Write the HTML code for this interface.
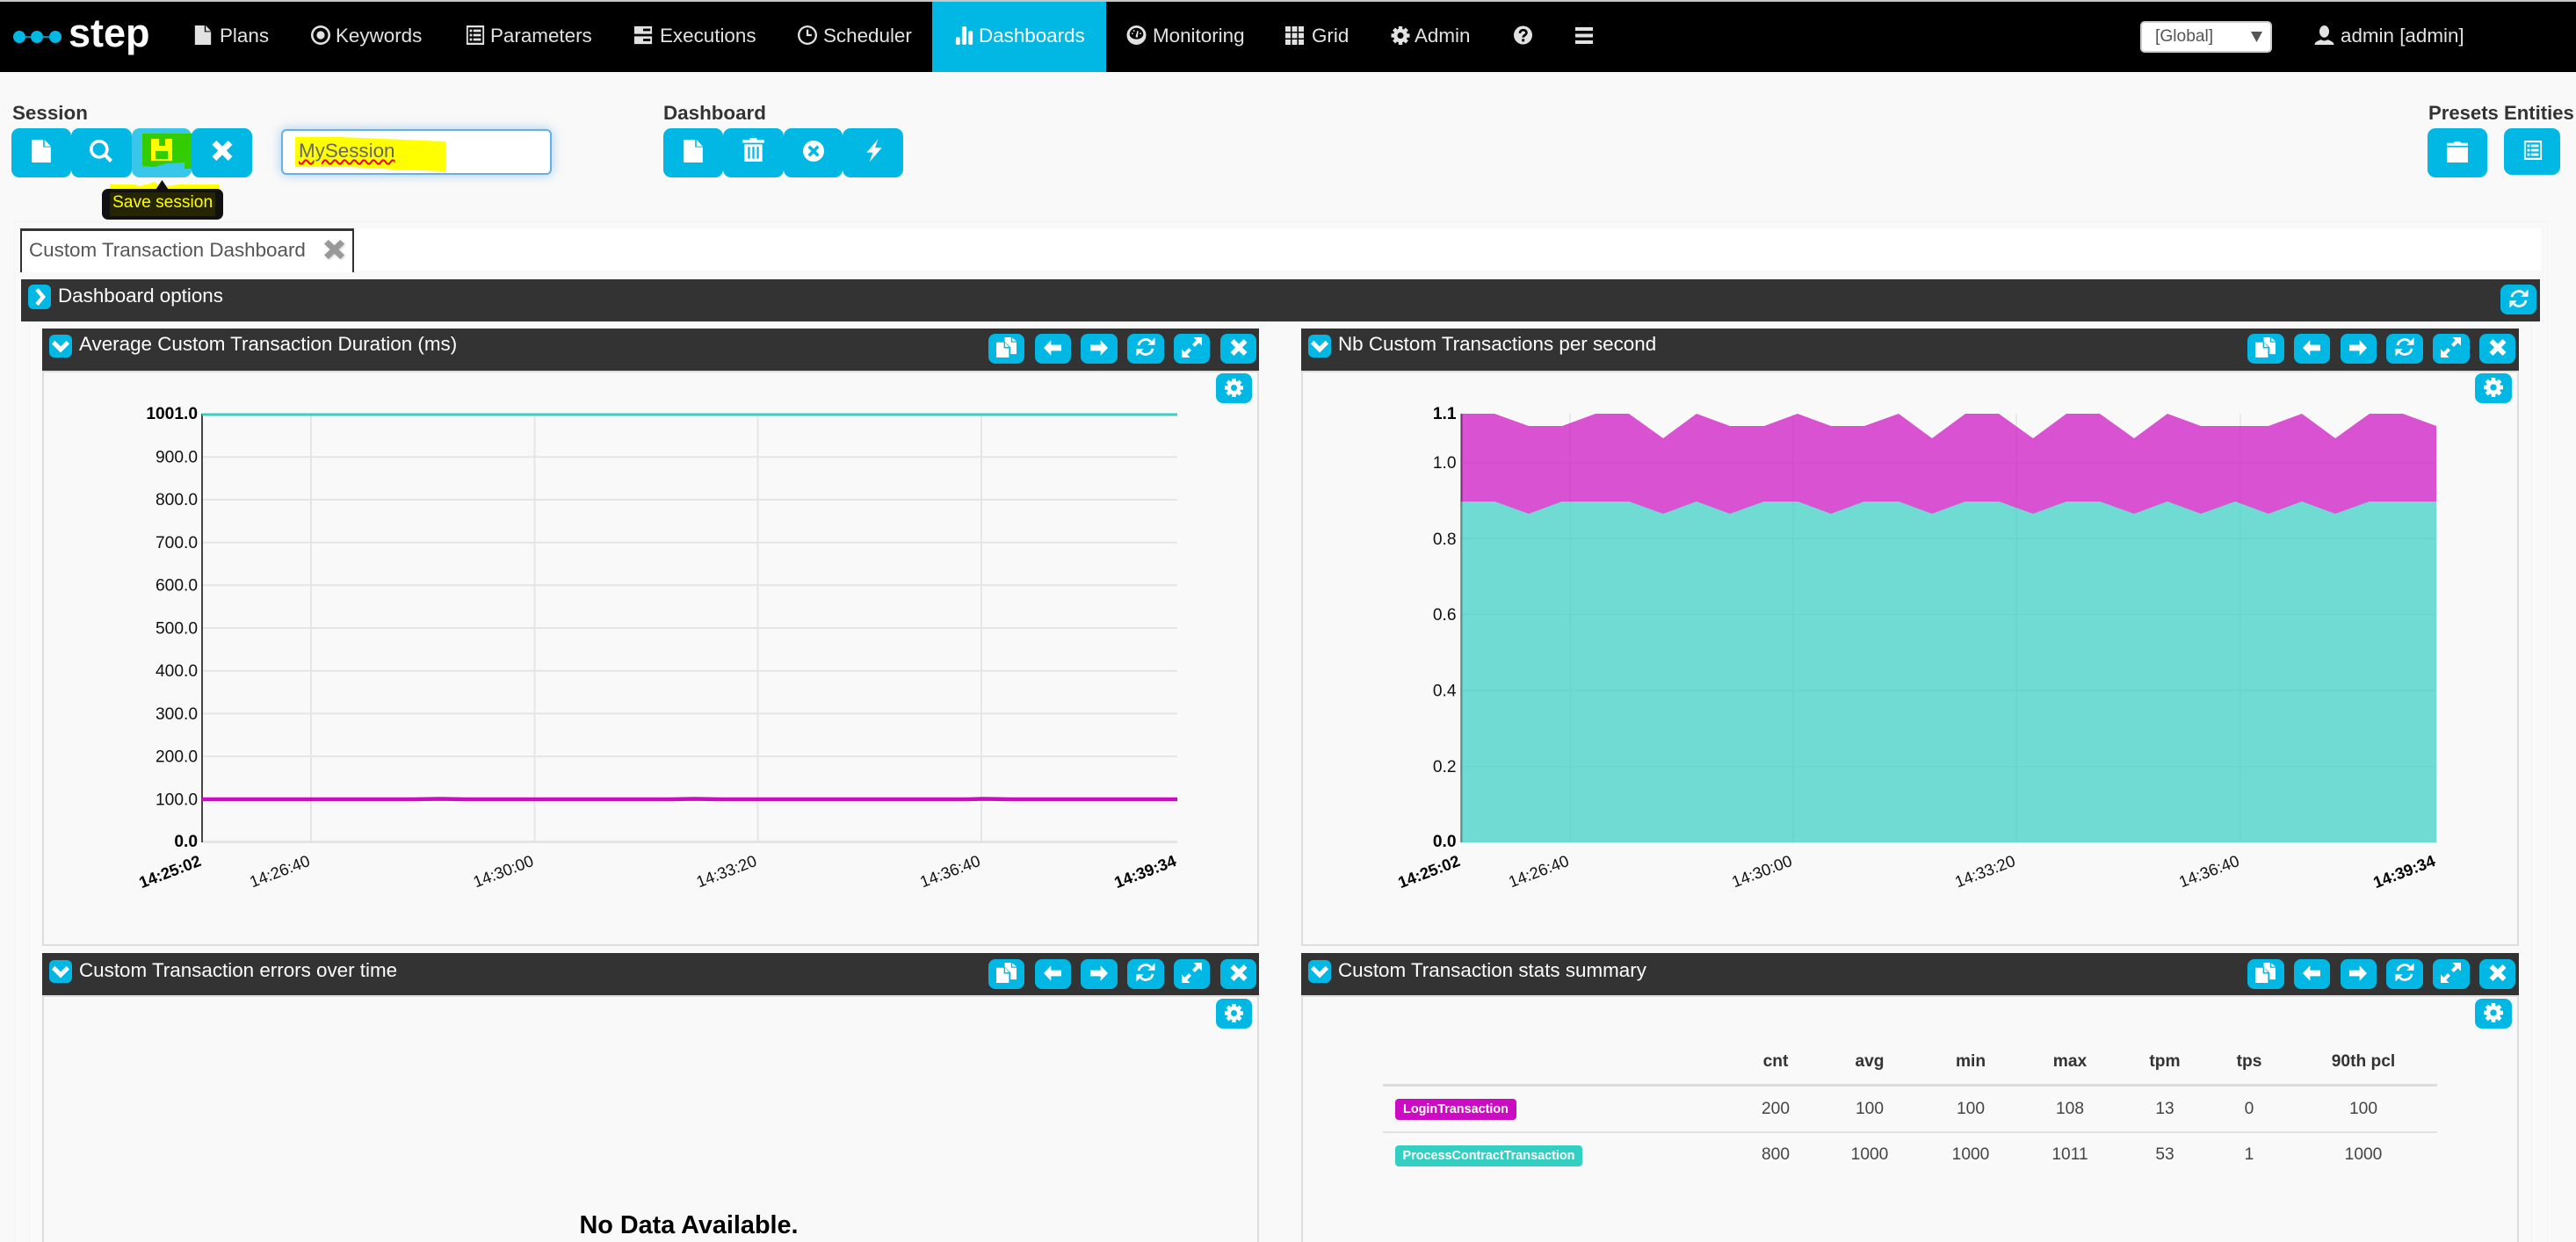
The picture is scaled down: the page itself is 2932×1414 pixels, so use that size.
<!DOCTYPE html>
<html lang="en">
<head>
<meta charset="utf-8">
<title>step - Dashboards</title>
<style>
html,body{margin:0;padding:0;width:2932px;height:1414px;overflow:hidden;background:#f9f9f9;font-family:"Liberation Sans",Arial,sans-serif;color:#333}
div,span,svg{box-sizing:border-box}
#root{position:absolute;left:0;top:0;width:2932px;height:1414px;overflow:hidden;background:#f9f9f9}
.a{position:absolute}
.t{position:absolute;white-space:nowrap;font-size:22.4px;line-height:30px}
.n{color:#e2e2e2;top:26px}
svg.i{position:absolute;overflow:visible;fill:currentColor}
.nav{position:absolute;left:0;top:2px;width:2932px;height:80px;background:#000}
.top{position:absolute;left:0;top:0;width:2932px;height:2px;background:#c8c8c8}
.ni{color:#e2e2e2}
.b{position:absolute;top:146px;height:56px;background:#00b8e3;border-radius:9px;color:#fff}
.s{position:absolute;height:34px;background:#00b8e3;border-radius:8px;color:#fff}
.h{position:absolute;height:48px;background:#333}
.p{position:absolute;border:2.5px solid #ddd;border-top-width:2px}
.c{position:absolute;white-space:nowrap;transform:translateX(-50%);font-size:19.2px;line-height:26px;color:#444}
.th{font-weight:bold;color:#333}
.tag{position:absolute;left:1588px;height:24px;border-radius:4px;color:#fff;font-weight:bold;font-size:14.4px;line-height:24px;text-align:center;white-space:nowrap}
.fl{position:absolute;background:#f4f4f4;width:1px}
svg text{font-family:"Liberation Sans",Arial,sans-serif;font-size:19.2px;fill:#111}
svg text.bd{font-weight:bold;fill:#000}
svg text.x{font-size:18.4px}
</style>
</head>
<body>
<div id="root">
<svg width="0" height="0" style="position:absolute">
<defs>
<symbol id="file" viewBox="0 0 24 24"><path d="M2 0h12v8h8v16H2zM15.500 0l6.500 7h-6.500z"/></symbol>
<symbol id="search" viewBox="0 0 24 24"><path fill-rule="evenodd" d="M0 10a10 10 0 1 0 20 0a10 10 0 1 0-20 0zM3.400 10a6.600 6.600 0 1 1 13.200 0a6.600 6.600 0 1 1-13.200 0z"/><path d="M15.500 18l2.700-2.700 5.800 5.900-2.800 2.800z"/></symbol>
<symbol id="x" viewBox="0 0 24 24"><path d="M0 5l5-5 7 7 7-7 5 5-7 7 7 7-5 5-7-7-7 7-5-5 7-7z"/></symbol>
<symbol id="rec" viewBox="0 0 24 24"><path fill-rule="evenodd" d="M0 12a12 12 0 1 0 24 0a12 12 0 1 0-24 0zM2.800 12a9.200 9.200 0 1 1 18.400 0a9.200 9.200 0 1 1-18.400 0z"/><circle cx="12" cy="12" r="5"/></symbol>
<symbol id="list" viewBox="0 0 24 24"><path fill-rule="evenodd" d="M1 0h22v24H1zM3 2.500v19h18v-19z"/><path d="M5 5h3v3H5zM9.500 5H19v3H9.500zM5 10.500h3v3H5zM9.500 10.500H19v3H9.500zM5 16h3v3H5zM9.500 16H19v3H9.500z"/></symbol>
<symbol id="hdd" viewBox="0 0 24 24"><path fill-rule="evenodd" d="M1 1h22v9.500H1zM12 4v3h9V4zM1 13.500h22V23H1zM12 16.500v3h9v-3z"/></symbol>
<symbol id="time" viewBox="0 0 24 24"><path fill-rule="evenodd" d="M0 12a12 12 0 1 0 24 0a12 12 0 1 0-24 0zM2.500 12a9.500 9.500 0 1 1 19 0a9.500 9.500 0 1 1-19 0z"/><path d="M10.800 5h2.500v8.200h-2.500zM10.800 10.800h6.500v2.400h-6.500z"/></symbol>
<symbol id="stats" viewBox="0 0 24 24"><rect x="1" y="14" width="5.500" height="10" rx="2"/><rect x="9" y="0" width="6" height="24" rx="2.500"/><rect x="17.500" y="6" width="5.500" height="18" rx="2"/></symbol>
<symbol id="dash" viewBox="0 0 24 24"><path fill-rule="evenodd" d="M0 12a12 12 0 1 0 24 0a12 12 0 1 0-24 0zM3.500 11a8.500 8 0 1 1 17 0a8.500 6 0 0 1-17 0z"/><path d="M11 13.500l2-7 1.500.5-1 7.500a1.500 1.500 0 0 1-2.500-1z"/><circle cx="7" cy="10" r="1"/><circle cx="9" cy="6.500" r="1"/><circle cx="17" cy="10" r="1"/></symbol>
<symbol id="grid" viewBox="0 0 24 24"><path d="M0 0h6.800v6.800H0zM8.600 0h6.800v6.800H8.600zM17.200 0H24v6.800h-6.800zM0 8.600h6.800v6.800H0zM8.600 8.600h6.800v6.800H8.600zM17.200 8.600H24v6.800h-6.800zM0 17.200h6.800V24H0zM8.600 17.200h6.800V24H8.600zM17.200 17.200H24V24h-6.800z"/></symbol>
<symbol id="cog" viewBox="0 0 24 24"><path fill-rule="evenodd" d="M3 12a9 9 0 1 0 18 0a9 9 0 1 0-18 0zM8 12a4 4 0 1 1 8 0a4 4 0 1 1-8 0z"/><rect x="9.500" y="0" width="5" height="5"/><rect x="9.500" y="19" width="5" height="5"/><rect x="0" y="9.500" width="5" height="5"/><rect x="19" y="9.500" width="5" height="5"/><rect x="9.500" y="0" width="5" height="5" transform="rotate(45 12 12)"/><rect x="9.500" y="0" width="5" height="5" transform="rotate(135 12 12)"/><rect x="9.500" y="0" width="5" height="5" transform="rotate(225 12 12)"/><rect x="9.500" y="0" width="5" height="5" transform="rotate(315 12 12)"/></symbol>
<symbol id="help" viewBox="0 0 24 24"><circle cx="12" cy="12" r="12"/><path d="M8 9.500c0-5.500 8.500-5.500 8.500-.5 0 3-4.300 3-4.300 6" fill="none" stroke="#000" stroke-width="3"/><rect x="10.500" y="17" width="3.400" height="3.400" fill="#000"/></symbol>
<symbol id="menu" viewBox="0 0 24 24"><path d="M0 0h24v5H0zM0 9.500h24v5H0zM0 19h24v5H0z"/></symbol>
<symbol id="user" viewBox="0 0 24 24"><ellipse cx="12" cy="7.500" rx="6" ry="7.500"/><path d="M0 24c0-4 5-5 8-6.500 1 1 2.500 1.500 4 1.500s3-.5 4-1.500c3 1.500 8 2.500 8 6.500z"/></symbol>
<symbol id="trash" viewBox="0 0 24 24"><path d="M8.500 0h7v2H23v3H1V2h7.500z"/><path fill-rule="evenodd" d="M3 6.500h18V24H3zM6.500 9v12h2V9zM11 9v12h2V9zM15.500 9v12h2V9z"/></symbol>
<symbol id="rc" viewBox="0 0 24 24"><path fill-rule="evenodd" d="M0 12a12 12 0 1 0 24 0a12 12 0 1 0-24 0zM8 5.500l4 4 4-4 2.500 2.500-4 4 4 4-2.500 2.500-4-4-4 4L5.500 16l4-4-4-4z"/></symbol>
<symbol id="flash" viewBox="0 0 24 24"><path d="M16 0L4 14h6.500L7 24 20 9h-7z"/></symbol>
<symbol id="folder" viewBox="0 0 24 24"><path d="M1 8h22v16H1zM1 3.500h7L9.500 2h5L16 3.500h7v3H1z"/></symbol>
<symbol id="dup" viewBox="0 0 24 24"><path d="M0 6h9v7h6v11H0zM10.500 6l4.500 5.500h-4.500z"/><path d="M10 0h7.500v6H24v14h-7v-8l-7-7zM19 .5l5 4.200h-5z"/></symbol>
<symbol id="al" viewBox="0 0 24 24"><path d="M0 12L10 1.500V8h14v8H10v6.500z"/></symbol>
<symbol id="ar" viewBox="0 0 24 24"><path d="M24 12L14 1.500V8H0v8h14v6.500z"/></symbol>
<symbol id="ref" viewBox="0 0 24 24"><path d="M3.200 10a8.800 8.800 0 0 1 15-4.500M20.800 14a8.800 8.800 0 0 1-15 4.500" fill="none" stroke="currentColor" stroke-width="3"/><path d="M23.500 .5v9h-9zM.5 23.500v-9h9z"/></symbol>
<symbol id="rs" viewBox="0 0 24 24"><path d="M14 0h10v10l-3.500-3.500-5 5-3-3 5-5zM10 24H0V14l3.500 3.500 5-5 3 3-5 5z"/></symbol>
<symbol id="cr" viewBox="0 0 24 24"><path d="M8 0l10 12L8 24l-4-3.500L11 12 4 3.500z"/></symbol>
<symbol id="cd" viewBox="0 0 24 24"><path d="M0 9l4-4.500 8 8 8-8L24 9 12 21z"/></symbol>
</defs>
</svg>

<div class="top"></div>
<div class="nav"></div>

<!-- logo -->
<svg class="a" style="left:10px;top:30px" width="66" height="24"><path d="M10 12h50" stroke="#00b8e3" stroke-width="1.500"/><circle cx="12" cy="12" r="7" fill="#00b8e3"/><circle cx="32" cy="12" r="7" fill="#00b8e3"/><circle cx="53" cy="12" r="7" fill="#00b8e3"/></svg>
<div class="t" style="left:78px;top:10px;font-size:45px;line-height:56px;font-weight:bold;color:#fff">step</div>

<!-- nav -->
<div class="a" style="left:1061px;top:2px;width:198px;height:80px;background:#00b8e3"></div>
<svg class="i ni" style="left:219px;top:29px" width="24" height="22"><use href="#file"/></svg><div class="t n" style="left:250px">Plans</div>
<svg class="i ni" style="left:354px;top:29px" width="22" height="22"><use href="#rec"/></svg><div class="t n" style="left:382px">Keywords</div>
<svg class="i ni" style="left:530px;top:29px" width="22" height="22"><use href="#list"/></svg><div class="t n" style="left:558px">Parameters</div>
<svg class="i ni" style="left:721px;top:29px" width="22" height="22"><use href="#hdd"/></svg><div class="t n" style="left:751px">Executions</div>
<svg class="i ni" style="left:908px;top:29px" width="22" height="22"><use href="#time"/></svg><div class="t n" style="left:937px">Scheduler</div>
<svg class="i" style="left:1087px;top:30px;color:#fff" width="21" height="21"><use href="#stats"/></svg><div class="t n" style="left:1114px;color:#fff">Dashboards</div>
<svg class="i ni" style="left:1282px;top:29px" width="23" height="22"><use href="#dash"/></svg><div class="t n" style="left:1312px">Monitoring</div>
<svg class="i ni" style="left:1463px;top:30px" width="21" height="21"><use href="#grid"/></svg><div class="t n" style="left:1493px">Grid</div>
<svg class="i ni" style="left:1583px;top:30px" width="22" height="21"><use href="#cog"/></svg><div class="t n" style="left:1610px">Admin</div>
<svg class="i ni" style="left:1723px;top:29px" width="21" height="22"><use href="#help"/></svg>
<svg class="i ni" style="left:1793px;top:31px" width="20" height="19" preserveAspectRatio="none" viewBox="0 0 24 24"><use href="#menu"/></svg>

<!-- select / user -->
<div class="a" style="left:2436px;top:24px;width:150px;height:36px;background:#fff;border:2px solid #ccc;border-radius:5px"></div>
<div class="t" style="left:2453px;top:27px;font-size:19.200px;color:#555">[Global]</div>
<svg class="a" style="left:2562px;top:36px" width="13" height="12"><path d="M0 0h13L6.500 12z" fill="#555"/></svg>
<svg class="i ni" style="left:2634px;top:29px" width="23" height="22"><use href="#user"/></svg>
<div class="t n" style="left:2664px">admin [admin]</div>

<!-- session -->
<div class="t" style="left:14px;top:114px;font-weight:bold">Session</div>
<div class="b" style="left:13px;width:68px"><svg class="i" style="left:21px;top:13px" width="26" height="26"><use href="#file"/></svg></div>
<div class="b" style="left:81px;width:69px"><svg class="i" style="left:21px;top:13px" width="26" height="26"><use href="#search"/></svg></div>
<div class="b" style="left:150px;width:68px;background:#38c6ea"></div>
<svg class="a" style="left:0;top:0" width="300" height="260">
<path d="M162 152h59v40h-11v-7l-20 1-15 4-13-1z" fill="#33cc00"/>
<path fill-rule="evenodd" d="M172 158h24v25h-24zM181 158v8h7v-8zM177 172v9h14v-9z" fill="#ffff00"/>
<path d="M125 210h28l6 2 6-2h4l6-3 5 3 10 2 14-2h45v8H125z" fill="#ffff00"/>
<path d="M184.500 205l8 12h-16z" fill="#111"/>
</svg>
<div class="b" style="left:218px;width:69px"><svg class="i" style="left:23px;top:14px" width="24" height="23"><use href="#x"/></svg></div>

<div class="a" style="left:116px;top:215px;width:138px;height:35px;background:#111;border-radius:7px"></div>
<div class="a" style="left:125px;top:219px;width:120px;height:27px;background:#252500"></div>
<div class="t" style="left:128px;top:216px;font-size:19.200px;color:#ffff00">Save session</div>

<div class="a" style="left:320px;top:147px;width:308px;height:52px;background:#fff;border:2px solid #66afe9;border-radius:6px;box-shadow:0 0 13px rgba(102,175,233,.6)"></div>
<svg class="a" style="left:330px;top:150px" width="190" height="50"><path d="M6 6h51l120 5v34l-57-2-50-3H6z" fill="#ffff00"/></svg>
<div class="t" style="left:340px;top:157px;color:#666;text-decoration:underline wavy #e00;text-decoration-thickness:1.500px;text-underline-offset:2px">MySession</div>

<!-- dashboard -->
<div class="t" style="left:755px;top:114px;font-weight:bold">Dashboard</div>
<div class="b" style="left:755px;width:68px"><svg class="i" style="left:21px;top:13px" width="26" height="26"><use href="#file"/></svg></div>
<div class="b" style="left:823px;width:69px"><svg class="i" style="left:21px;top:10px" width="27" height="29"><use href="#trash"/></svg></div>
<div class="b" style="left:892px;width:67px"><svg class="i" style="left:20px;top:14px" width="28" height="24"><use href="#rc"/></svg></div>
<div class="b" style="left:959px;width:69px"><svg class="i" style="left:23px;top:12px" width="26" height="27"><use href="#flash"/></svg></div>

<!-- presets -->
<div class="t" style="left:2764px;top:114px;font-weight:bold;font-size:22.100px">Presets Entities</div>
<div class="b" style="left:2763px;width:68px"><svg class="i" style="left:20px;top:13px" width="28" height="26"><use href="#folder"/></svg></div>
<div class="b" style="left:2850px;width:64px;height:53px"><svg class="i" style="left:21px;top:14px" width="24" height="22"><use href="#list"/></svg></div>

<!-- faint container lines -->
<div class="a" style="left:16px;top:252px;width:2884px;height:1px;background:#f3f3f3"></div>
<div class="fl" style="left:16px;top:252px;height:1162px"></div>
<div class="fl" style="left:33px;top:366px;height:1048px"></div>
<div class="fl" style="left:2881px;top:366px;height:1048px"></div>
<div class="fl" style="left:2899px;top:252px;height:1162px"></div>

<!-- tabs -->
<div class="a" style="left:403px;top:260px;width:2489px;height:48px;background:#fff"></div>
<div class="a" style="left:23px;top:260px;width:380px;height:50px;background:#fff;border:2px solid #333;border-top-width:3px;border-bottom:0"></div>
<div class="t" style="left:33px;top:270px;color:#555">Custom Transaction Dashboard</div>
<svg class="i" style="left:369px;top:273px;color:#999;filter:drop-shadow(1px 1px 1px #ccc)" width="23" height="22" preserveAspectRatio="none" viewBox="0 0 24 24"><use href="#x"/></svg>

<!-- options bar -->
<div class="h" style="left:24px;top:318px;width:2867px"></div>
<div class="s" style="left:32px;top:324px;width:26px;height:28px;border-radius:6px"><svg class="i" style="left:5px;top:4px" width="20" height="20"><use href="#cr"/></svg></div>
<div class="t" style="left:66px;top:322px;color:#fff">Dashboard options</div>
<div class="s" style="left:2846px;top:324px;width:41px"><svg class="i" style="left:10px;top:5px" width="22" height="22"><use href="#ref"/></svg></div>

<!-- panels -->
<div class="p" style="left:48px;top:422px;width:1385px;height:655px"></div>
<div class="p" style="left:1481px;top:422px;width:1386px;height:655px"></div>
<div class="p" style="left:48px;top:1133px;width:1385px;height:281px;border-bottom:0"></div>
<div class="p" style="left:1481px;top:1133px;width:1386px;height:281px;border-bottom:0"></div>

<!-- charts -->
<svg class="a" style="left:0;top:0" width="2932" height="1414">
<g stroke="#e5e5e5" stroke-width="2" fill="none">
<path d="M230 909.800H1340M230 861.100H1340M230 812.400H1340M230 763.700H1340M230 715H1340M230 666.300H1340M230 617.600H1340M230 568.900H1340M230 520.200H1340"/>
<path d="M354 472V958M608.500 472V958M862.500 472V958M1117 472V958"/>
<path d="M230 958.500H1340" stroke-width="3"/>
</g>
<path d="M230 471V959" stroke="#444" stroke-width="2"/>
<path d="M230 472H1340" stroke="#36cfc0" stroke-width="3"/>
<path d="M230 910H470L500 909.500 530 910H760L790 909.500 820 910H1100L1120 909.500 1150 910H1340" stroke="#cc0cc2" stroke-width="4.500" fill="none"/>
<g text-anchor="end">
<text class="bd" x="225" y="477">1001.0</text>
<text x="225" y="526.500">900.0</text><text x="225" y="575">800.0</text><text x="225" y="624">700.0</text><text x="225" y="672.500">600.0</text><text x="225" y="721.500">500.0</text><text x="225" y="770">400.0</text><text x="225" y="819">300.0</text><text x="225" y="867.500">200.0</text><text x="225" y="916.500">100.0</text>
<text class="bd" x="225" y="964">0.0</text>
<text class="bd x" x="230" y="985" transform="rotate(-21 230 985)">14:25:02</text>
<text class="x" x="354" y="985" transform="rotate(-21 354 985)">14:26:40</text>
<text class="x" x="608.500" y="985" transform="rotate(-21 608.500 985)">14:30:00</text>
<text class="x" x="862.500" y="985" transform="rotate(-21 862.500 985)">14:33:20</text>
<text class="x" x="1117" y="985" transform="rotate(-21 1117 985)">14:36:40</text>
<text class="bd x" x="1340" y="985" transform="rotate(-21 1340 985)">14:39:34</text>
</g>

<g stroke="#e5e5e5" stroke-width="1.500" fill="none">
<path d="M1663 527H2773M1663 613H2773M1663 699.500H2773M1663 786H2773M1663 872.500H2773"/>
<path d="M1787 471V959M2041 471V959M2295 471V959M2550 471V959"/>
<path d="M1663 959.500H2773" stroke-width="2"/>
</g>
<path d="M1663.500 471V959" stroke="#333" stroke-width="2"/>
<path opacity=".7" fill="#cc0cc2" d="M1663 471 1701 471 1740 485 1778 485 1816 471 1854 471 1893 499 1931 471 1969 485 2008 485 2046 471 2084 485 2122 485 2161 471 2199 499 2237 471 2275 471 2314 499 2352 471 2390 471 2429 499 2467 471 2505 485 2544 485 2582 485 2620 471 2658 499 2697 471 2735 471 2773 485 2773 571 2735 571 2697 571 2658 585 2620 571 2582 585 2544 571 2505 585 2467 571 2429 585 2390 571 2352 571 2314 585 2275 571 2237 571 2199 585 2161 571 2122 571 2084 585 2046 571 2008 571 1969 585 1931 571 1893 585 1854 571 1816 571 1778 571 1740 585 1701 571 1663 571z"/>
<path opacity=".7" fill="#34cfc3" d="M1663 571 1701 571 1740 585 1778 571 1816 571 1854 571 1893 585 1931 571 1969 585 2008 571 2046 571 2084 585 2122 571 2161 571 2199 585 2237 571 2275 571 2314 585 2352 571 2390 571 2429 585 2467 571 2505 585 2544 571 2582 585 2620 571 2658 585 2697 571 2735 571 2773 571 2773 959 1663 959z"/>
<g text-anchor="end">
<text class="bd" x="1657.500" y="477">1.1</text>
<text x="1657.500" y="533">1.0</text><text x="1657.500" y="620">0.8</text><text x="1657.500" y="706">0.6</text><text x="1657.500" y="792.500">0.4</text><text x="1657.500" y="879">0.2</text>
<text class="bd" x="1657.500" y="964">0.0</text>
<text class="bd x" x="1663" y="985" transform="rotate(-21 1663 985)">14:25:02</text>
<text class="x" x="1787" y="985" transform="rotate(-21 1787 985)">14:26:40</text>
<text class="x" x="2041" y="985" transform="rotate(-21 2041 985)">14:30:00</text>
<text class="x" x="2295" y="985" transform="rotate(-21 2295 985)">14:33:20</text>
<text class="x" x="2550" y="985" transform="rotate(-21 2550 985)">14:36:40</text>
<text class="bd x" x="2773" y="985" transform="rotate(-21 2773 985)">14:39:34</text>
</g>
</svg>

<!-- panel headers row 1 -->
<div class="h" style="left:48px;top:374px;width:1385px"></div>
<div class="s" style="left:56px;top:381px;width:26px;height:26px;border-radius:6px"><svg class="i" style="left:3px;top:3px" width="20" height="20"><use href="#cd"/></svg></div>
<div class="t" style="left:90px;top:377px;color:#fff">Average Custom Transaction Duration (ms)</div>
<div class="s" style="left:1125px;top:380px;width:41px"><svg class="i" style="left:9px;top:4px" width="23" height="23"><use href="#dup"/></svg></div>
<div class="s" style="left:1178px;top:380px;width:41px"><svg class="i" style="left:9px;top:6px" width="22" height="20"><use href="#al"/></svg></div>
<div class="s" style="left:1230px;top:380px;width:42px"><svg class="i" style="left:10px;top:6px" width="22" height="20"><use href="#ar"/></svg></div>
<div class="s" style="left:1283px;top:380px;width:42px"><svg class="i" style="left:10px;top:4px" width="22" height="22"><use href="#ref"/></svg></div>
<div class="s" style="left:1336px;top:380px;width:41px"><svg class="i" style="left:9px;top:4px" width="23" height="23"><use href="#rs"/></svg></div>
<div class="s" style="left:1389px;top:380px;width:41px"><svg class="i" style="left:11px;top:6px" width="20" height="19"><use href="#x"/></svg></div>
<div class="s" style="left:1384px;top:425px;width:41px"><svg class="i" style="left:10px;top:6px" width="21" height="21"><use href="#cog"/></svg></div>

<div class="h" style="left:1481px;top:374px;width:1386px"></div>
<div class="s" style="left:1489px;top:381px;width:26px;height:26px;border-radius:6px"><svg class="i" style="left:3px;top:3px" width="20" height="20"><use href="#cd"/></svg></div>
<div class="t" style="left:1523px;top:377px;color:#fff">Nb Custom Transactions per second</div>
<div class="s" style="left:2558px;top:380px;width:42px"><svg class="i" style="left:9px;top:4px" width="23" height="23"><use href="#dup"/></svg></div>
<div class="s" style="left:2611px;top:380px;width:41px"><svg class="i" style="left:9px;top:6px" width="22" height="20"><use href="#al"/></svg></div>
<div class="s" style="left:2664px;top:380px;width:41px"><svg class="i" style="left:9px;top:6px" width="22" height="20"><use href="#ar"/></svg></div>
<div class="s" style="left:2716px;top:380px;width:42px"><svg class="i" style="left:10px;top:4px" width="22" height="22"><use href="#ref"/></svg></div>
<div class="s" style="left:2769px;top:380px;width:42px"><svg class="i" style="left:9px;top:4px" width="23" height="23"><use href="#rs"/></svg></div>
<div class="s" style="left:2822px;top:380px;width:41px"><svg class="i" style="left:11px;top:6px" width="20" height="19"><use href="#x"/></svg></div>
<div class="s" style="left:2817px;top:425px;width:42px"><svg class="i" style="left:10px;top:5px" width="22" height="22"><use href="#cog"/></svg></div>

<!-- panel headers row 2 -->
<div class="h" style="left:48px;top:1085px;width:1385px"></div>
<div class="s" style="left:56px;top:1093px;width:26px;height:26px;border-radius:6px"><svg class="i" style="left:3px;top:3px" width="20" height="20"><use href="#cd"/></svg></div>
<div class="t" style="left:90px;top:1090px;color:#fff">Custom Transaction errors over time</div>
<div class="s" style="left:1125px;top:1092px;width:41px"><svg class="i" style="left:9px;top:4px" width="23" height="23"><use href="#dup"/></svg></div>
<div class="s" style="left:1178px;top:1092px;width:41px"><svg class="i" style="left:9px;top:6px" width="22" height="20"><use href="#al"/></svg></div>
<div class="s" style="left:1230px;top:1092px;width:42px"><svg class="i" style="left:10px;top:6px" width="22" height="20"><use href="#ar"/></svg></div>
<div class="s" style="left:1283px;top:1092px;width:42px"><svg class="i" style="left:10px;top:4px" width="22" height="22"><use href="#ref"/></svg></div>
<div class="s" style="left:1336px;top:1092px;width:41px"><svg class="i" style="left:9px;top:4px" width="23" height="23"><use href="#rs"/></svg></div>
<div class="s" style="left:1389px;top:1092px;width:41px"><svg class="i" style="left:11px;top:6px" width="20" height="19"><use href="#x"/></svg></div>
<div class="s" style="left:1384px;top:1137px;width:41px"><svg class="i" style="left:10px;top:6px" width="21" height="21"><use href="#cog"/></svg></div>

<div class="h" style="left:1481px;top:1085px;width:1386px"></div>
<div class="s" style="left:1489px;top:1093px;width:26px;height:26px;border-radius:6px"><svg class="i" style="left:3px;top:3px" width="20" height="20"><use href="#cd"/></svg></div>
<div class="t" style="left:1523px;top:1090px;color:#fff">Custom Transaction stats summary</div>
<div class="s" style="left:2558px;top:1092px;width:42px"><svg class="i" style="left:9px;top:4px" width="23" height="23"><use href="#dup"/></svg></div>
<div class="s" style="left:2611px;top:1092px;width:41px"><svg class="i" style="left:9px;top:6px" width="22" height="20"><use href="#al"/></svg></div>
<div class="s" style="left:2664px;top:1092px;width:41px"><svg class="i" style="left:9px;top:6px" width="22" height="20"><use href="#ar"/></svg></div>
<div class="s" style="left:2716px;top:1092px;width:42px"><svg class="i" style="left:10px;top:4px" width="22" height="22"><use href="#ref"/></svg></div>
<div class="s" style="left:2769px;top:1092px;width:42px"><svg class="i" style="left:9px;top:4px" width="23" height="23"><use href="#rs"/></svg></div>
<div class="s" style="left:2822px;top:1092px;width:41px"><svg class="i" style="left:11px;top:6px" width="20" height="19"><use href="#x"/></svg></div>
<div class="s" style="left:2817px;top:1137px;width:42px"><svg class="i" style="left:10px;top:5px" width="22" height="22"><use href="#cog"/></svg></div>

<!-- no data -->
<div class="t" style="left:784px;top:1377px;transform:translateX(-50%);font-size:28.800px;line-height:36px;font-weight:bold;color:#000">No Data Available.</div>

<!-- table -->
<div class="a" style="left:1574px;top:1234px;width:1200px;height:3px;background:#ddd"></div>
<div class="a" style="left:1574px;top:1288px;width:1200px;height:2px;background:#e2e2e2"></div>
<div class="c th" style="left:2021px;top:1196px">cnt</div>
<div class="c th" style="left:2128px;top:1196px">avg</div>
<div class="c th" style="left:2243px;top:1196px">min</div>
<div class="c th" style="left:2356px;top:1196px">max</div>
<div class="c th" style="left:2464px;top:1196px">tpm</div>
<div class="c th" style="left:2560px;top:1196px">tps</div>
<div class="c th" style="left:2690px;top:1196px">90th pcl</div>
<div class="tag" style="top:1251px;width:138px;background:#cc0cc2">LoginTransaction</div>
<div class="c" style="left:2021px;top:1250px">200</div>
<div class="c" style="left:2128px;top:1250px">100</div>
<div class="c" style="left:2243px;top:1250px">100</div>
<div class="c" style="left:2356px;top:1250px">108</div>
<div class="c" style="left:2464px;top:1250px">13</div>
<div class="c" style="left:2560px;top:1250px">0</div>
<div class="c" style="left:2690px;top:1250px">100</div>
<div class="tag" style="top:1304px;width:213px;background:#34cfc3">ProcessContractTransaction</div>
<div class="c" style="left:2021px;top:1302px">800</div>
<div class="c" style="left:2128px;top:1302px">1000</div>
<div class="c" style="left:2243px;top:1302px">1000</div>
<div class="c" style="left:2356px;top:1302px">1011</div>
<div class="c" style="left:2464px;top:1302px">53</div>
<div class="c" style="left:2560px;top:1302px">1</div>
<div class="c" style="left:2690px;top:1302px">1000</div>
</div>
</body>
</html>
